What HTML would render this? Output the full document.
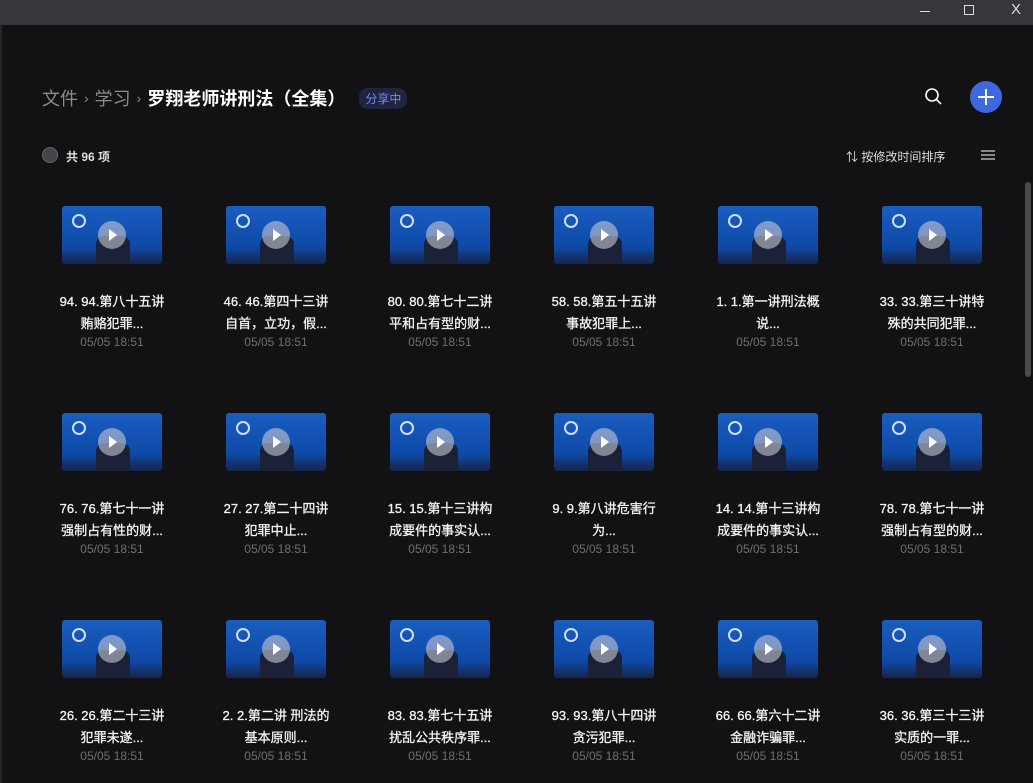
<!DOCTYPE html>
<html><head><meta charset="utf-8"><style>
*{margin:0;padding:0;box-sizing:border-box}
body{width:1033px;height:783px;overflow:hidden;background:#121215;font-family:"Liberation Sans","Noto Sans CJK SC",sans-serif;position:relative;color:#fff}
.tb{position:absolute;left:0;top:0;width:1033px;height:25px;background:#36373c}
.ttl{position:absolute;top:85px;left:42px;font-size:18px;color:#8a8a8f;display:flex;align-items:center;white-space:nowrap}
.ttl b{color:#fff;font-weight:bold}
.ttl .s{margin:0 6px;font-size:14px}
.tag{margin-left:14px;background:#1f2540;color:#6f8bff;font-size:12px;padding:2px 6px;border-radius:9px;font-weight:normal}
.item{position:absolute;width:140px;text-align:center}
.th{width:100px;height:58px;margin:0 auto;border-radius:3px;background:linear-gradient(180deg,#1a5dc0,#0e4aa8 70%,#17244a);position:relative;overflow:hidden}
.th .p{position:absolute;left:36px;top:15px;width:28px;height:28px;border-radius:50%;background:rgba(200,200,210,.6)}
.th .p:after{content:"";position:absolute;left:11px;top:8px;border-left:8px solid #fff;border-top:6px solid transparent;border-bottom:6px solid transparent}
.th .m{position:absolute;left:34px;top:30px;width:34px;height:28px;background:#1b2238;border-radius:8px 8px 0 0}
.th .l{position:absolute;left:10px;top:8px;width:14px;height:14px;border-radius:50%;border:2px solid #cfe0ff}
.t{font-size:13px;color:#f4f4f4;line-height:22px;margin-top:27px;-webkit-text-stroke:0.3px #f4f4f4}
.d{font-size:12px;color:#6f6f74;margin-top:0}
</style></head><body>
<div class="tb">
<div style="position:absolute;left:920px;top:11px;width:10px;height:1px;background:#ddd"></div>
<div style="position:absolute;left:964px;top:5px;width:10px;height:10px;border:1px solid #ddd"></div>
<div style="position:absolute;left:1011px;top:1px;color:#ddd;font-size:15px">X</div>
</div>
<div style="position:absolute;left:0;top:25px;width:2px;height:758px;background:#26262a"></div>
<div class="ttl">文件<span class="s">›</span>学习<span class="s">›</span><b>罗翔老师讲刑法（全集）</b><span class="tag">分享中</span></div>
<svg style="position:absolute;left:924px;top:87px" width="20" height="20"><circle cx="8" cy="8" r="6" fill="none" stroke="#fff" stroke-width="1.6"/><line x1="12.5" y1="12.5" x2="17" y2="17" stroke="#fff" stroke-width="1.6"/></svg>
<div style="position:absolute;left:970px;top:81px;width:32px;height:32px;border-radius:50%;background:#3e68e0"></div>
<div style="position:absolute;left:978px;top:96px;width:16px;height:2px;background:#fff"></div>
<div style="position:absolute;left:985px;top:89px;width:2px;height:16px;background:#fff"></div>
<div style="position:absolute;left:42px;top:147px;width:16px;height:16px;border-radius:50%;background:#444448;border:1px solid #666"></div>
<div style="position:absolute;left:66px;top:148px;font-size:12px;color:#ddd;font-weight:bold">共 96 项</div>
<div style="position:absolute;left:846px;top:148px;font-size:12px;color:#ddd">⇅ 按修改时间排序</div>
<div style="position:absolute;left:981px;top:150px;width:14px;height:10px;border-top:2px solid #888;border-bottom:2px solid #888"><div style="margin-top:2px;height:2px;background:#888"></div></div>
<div style="position:absolute;left:1025px;top:182px;width:6px;height:195px;background:#4a4a4e;border-radius:3px"></div>
<div id="g"></div>
<script>
var T=[["94. 94.第八十五讲","贿赂犯罪..."],["46. 46.第四十三讲","自首，立功，假..."],["80. 80.第七十二讲","平和占有型的财..."],["58. 58.第五十五讲","事故犯罪上..."],["1. 1.第一讲刑法概","说..."],["33. 33.第三十讲特","殊的共同犯罪..."],
["76. 76.第七十一讲","强制占有性的财..."],["27. 27.第二十四讲","犯罪中止..."],["15. 15.第十三讲构","成要件的事实认..."],["9. 9.第八讲危害行","为..."],["14. 14.第十三讲构","成要件的事实认..."],["78. 78.第七十一讲","强制占有型的财..."],
["26. 26.第二十三讲","犯罪未遂..."],["2. 2.第二讲 刑法的","基本原则..."],["83. 83.第七十五讲","扰乱公共秩序罪..."],["93. 93.第八十四讲","贪污犯罪..."],["66. 66.第六十二讲","金融诈骗罪..."],["36. 36.第三十三讲","实质的一罪..."]];
var h="";for(var i=0;i<18;i++){var c=i%6,r=Math.floor(i/6);
h+='<div class="item" style="left:'+(42+c*164)+'px;top:'+(206+r*207)+'px"><div class="th"><div class="l"></div><div class="m"></div><div class="p"></div></div><div class="t">'+T[i][0]+'<br>'+T[i][1]+'</div><div class="d">05/05 18:51</div></div>';}
document.getElementById("g").innerHTML=h;
</script>
</body></html>
